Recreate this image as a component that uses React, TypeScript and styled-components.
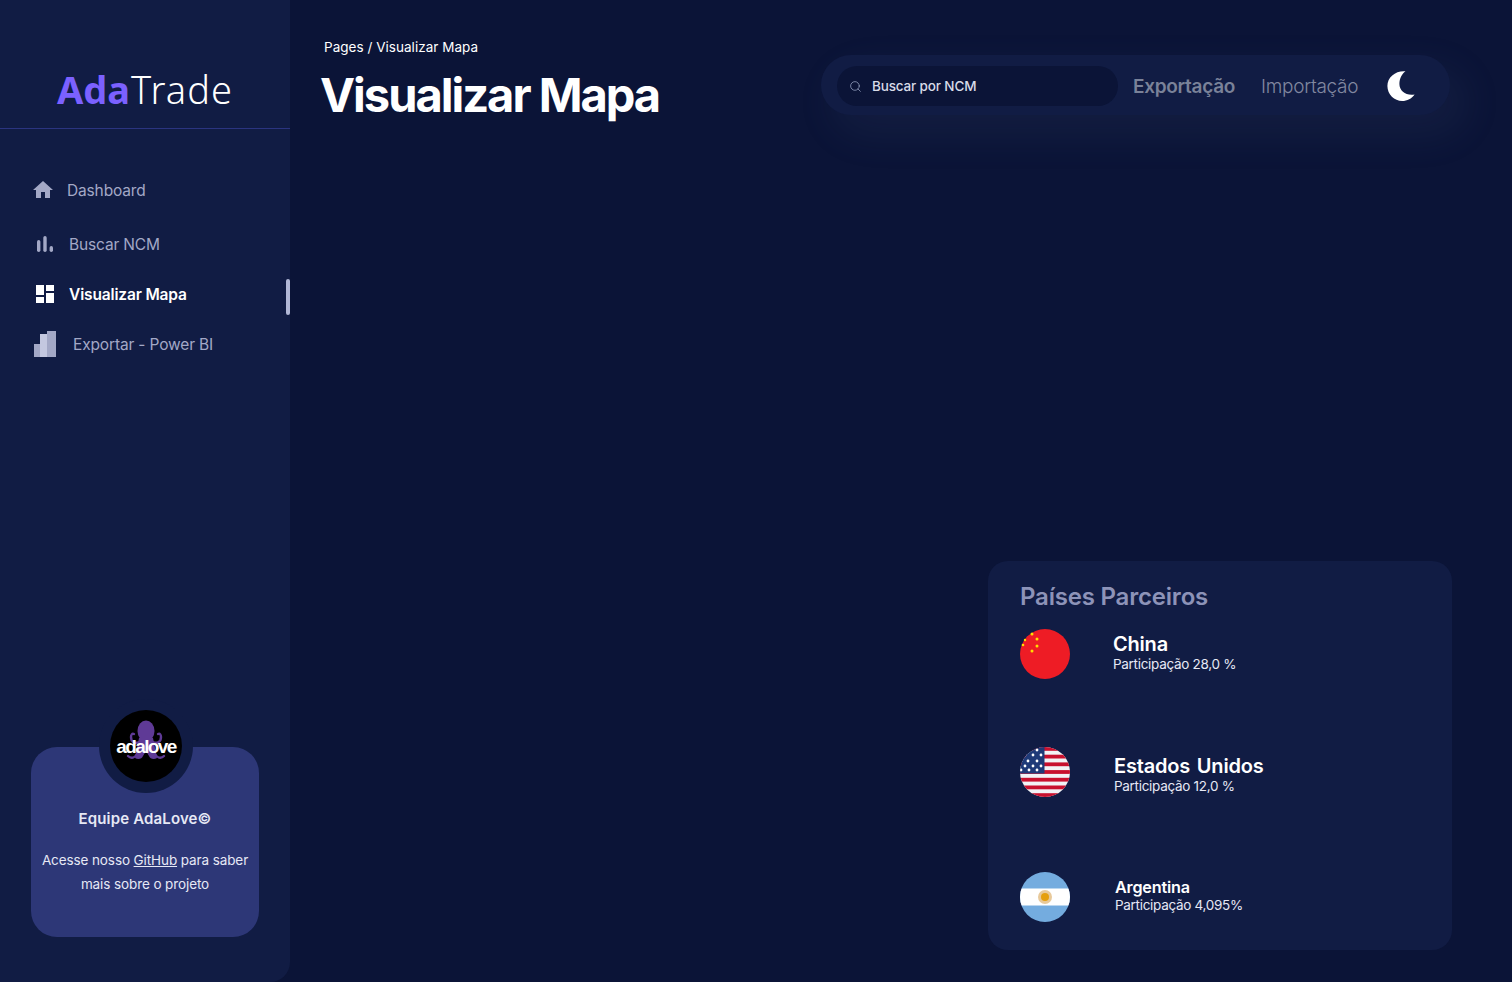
import React from "react";
import styled, { createGlobalStyle } from "styled-components";
import { MdHome, MdDashboard } from "react-icons/md";
import { Search } from "lucide-react";

const Global = createGlobalStyle`
  html, body { margin: 0; padding: 0; background: #0b1437; }
  body { font-family: Inter, "Noto Sans", sans-serif; }
  * { box-sizing: border-box; }
`;

const Page = styled.div`
  display: flex;
  width: 1512px;
  height: 982px;
  overflow: hidden;
  background: #0b1437;
`;

const Sidebar = styled.aside`
  width: 290px;
  height: 982px;
  flex: none;
  display: flex;
  flex-direction: column;
  background: #111c44;
  border-bottom-right-radius: 20px;
`;

const LogoBlock = styled.div`
  height: 129px;
  padding-top: 66px;
  padding-left: 57px;
  border-bottom: 1px solid #2b3480;
  font-family: "Noto Sans", sans-serif;
  font-size: 38px;
  line-height: 46px;
  letter-spacing: 1.1px;
  font-weight: 300;
  color: #fff;
  white-space: nowrap;
`;

const LogoAccent = styled.span`
  margin-right: 1px;
  color: #7b61ff;
  font-weight: 700;
  letter-spacing: 0;
`;

const Nav = styled.nav`
  display: flex;
  flex-direction: column;
  padding-top: 34px;
`;

const NavItem = styled.a<{ $active?: boolean; $h: number; $gap: number; $left: number }>`
  position: relative;
  display: flex;
  align-items: center;
  height: ${(p) => p.$h}px;
  padding-left: ${(p) => p.$left}px;
  gap: ${(p) => p.$gap}px;
  font-size: 15.5px;
  font-weight: ${(p) => (p.$active ? 600 : 400)};
  letter-spacing: -0.15px;
  color: ${(p) => (p.$active ? "#ffffff" : "#a3a8c6")};
  white-space: nowrap;
`;

const ActiveBar = styled.span`
  position: absolute;
  right: 0;
  top: 8px;
  width: 4px;
  height: 36px;
  border-radius: 2px;
  background: #b1b7d6;
`;

const Bottom = styled.div`
  margin-top: auto;
  padding: 0 31px 45px;
`;

const Card = styled.div`
  position: relative;
  width: 228px;
  height: 190px;
  padding-top: 62px;
  border-radius: 26px;
  background: #2d3777;
  text-align: center;
  color: #fff;
`;

const AvatarRing = styled.div`
  position: absolute;
  left: 68px;
  top: -48px;
  width: 94px;
  height: 94px;
  border-radius: 50%;
  background: #111c44;
  display: flex;
  align-items: center;
  justify-content: center;
`;

const Avatar = styled.div`
  position: relative;
  width: 72px;
  height: 72px;
  border-radius: 50%;
  background: #000;
  overflow: hidden;
`;

const AvatarText = styled.span`
  position: absolute;
  left: 0;
  right: 0;
  top: 25px;
  text-align: center;
  font-family: "Liberation Sans", sans-serif;
  font-size: 19px;
  line-height: 24px;
  font-weight: 700;
  letter-spacing: -1.6px;
  color: #fff;
`;

const OctopusIcon = styled.svg`
  position: absolute;
  left: 12px;
  top: 10px;
`;

const CardTitle = styled.div`
  font-size: 15px;
  font-weight: 600;
  line-height: 20px;
  letter-spacing: 0.15px;
  color: #e6e8f5;
`;

const CardText = styled.p`
  margin: 19px 0 0;
  font-size: 13.5px;
  line-height: 24px;
  letter-spacing: -0.1px;
  color: #e6e8f5;
`;

const CardLink = styled.a`
  text-decoration: underline;
`;

const Main = styled.main`
  flex: 1;
  display: flex;
  flex-direction: column;
  padding: 38px 60px 32px 30px;
`;

const Header = styled.header`
  display: flex;
  justify-content: space-between;
  align-items: flex-start;
`;

const TitleBlock = styled.div`
  display: flex;
  flex-direction: column;
`;

const Crumb = styled.div`
  padding-left: 4px;
  font-size: 13.5px;
  line-height: 18px;
  letter-spacing: 0.03px;
  color: #fff;
`;

const Title = styled.h1`
  margin: 10px 0 0;
  font-size: 47px;
  line-height: 58px;
  font-weight: 700;
  letter-spacing: -2px;
  color: #fff;
`;

const Toolbar = styled.div`
  display: flex;
  align-items: center;
  width: 629px;
  height: 60px;
  margin: 17px 2px 0 0;
  padding: 2px 0 0 16px;
  border-radius: 30px;
  background: #111c44;
  box-shadow: 14px 17px 40px 4px rgba(112, 144, 176, 0.08);
`;

const SearchBox = styled.div`
  display: flex;
  align-items: center;
  gap: 10px;
  width: 281px;
  height: 40px;
  padding-left: 12px;
  border-radius: 20px;
  background: #0b1437;
  font-size: 13.5px;
  font-weight: 500;
  letter-spacing: -0.15px;
  color: #d8dbe8;
`;

const Tab = styled.span<{ $strong?: boolean; $ml: number }>`
  margin-left: ${(p) => p.$ml}px;
  font-size: 19px;
  font-weight: ${(p) => (p.$strong ? 600 : 300)};
  letter-spacing: -0.3px;
  color: ${(p) => (p.$strong ? "#7a8299" : "#8188a0")};
`;

const MoonIcon = styled.svg`
  margin-left: 29px;
  flex: none;
`;

const Panel = styled.section`
  margin: auto 0 0 auto;
  width: 464px;
  height: 389px;
  padding: 20px 32px 0;
  border-radius: 20px;
  background: #111c44;
`;

const PanelTitle = styled.h2`
  margin: 0 0 16px;
  font-size: 24px;
  line-height: 32px;
  font-weight: 600;
  letter-spacing: -0.2px;
  color: #8d93b8;
`;

const Partner = styled.div<{ $gap: number; $mt: number }>`
  display: flex;
  align-items: flex-start;
  gap: ${(p) => p.$gap}px;
  margin-top: ${(p) => p.$mt}px;
`;

const Flag = styled.svg`
  flex: none;
  display: block;
`;

const PartnerInfo = styled.div<{ $pt: number }>`
  padding-top: ${(p) => p.$pt}px;
  color: #fff;
`;

const PartnerName = styled.div<{ $small?: boolean }>`
  font-size: ${(p) => (p.$small ? 16.2 : 20)}px;
  line-height: ${(p) => (p.$small ? 18 : 22)}px;
  font-weight: 600;
  letter-spacing: -0.2px;
  word-spacing: 2px;
`;

const PartnerShare = styled.div`
  margin-top: 1px;
  font-size: 13.5px;
  line-height: 16px;
  letter-spacing: -0.3px;
  color: #e6e8f5;
`;

function Bars() {
  return (
    <svg width="16" height="16" viewBox="0 0 16 16" fill="#a3a8c6" aria-hidden="true">
      <rect x="0" y="4" width="3.4" height="12" rx="1.7" />
      <rect x="6.3" y="0" width="3.4" height="16" rx="1.7" />
      <rect x="12.6" y="10" width="3.4" height="6" rx="1.7" />
    </svg>
  );
}

function PowerBi() {
  return (
    <svg width="22" height="26" viewBox="0 0 22 26" aria-hidden="true">
      <rect x="0" y="13" width="9" height="13" fill="#a3a8c6" />
      <rect x="6" y="3" width="7" height="23" fill="#c4c8e0" />
      <rect x="13" y="0" width="9" height="26" fill="#a3a8c6" />
    </svg>
  );
}

function Octopus() {
  return (
    <OctopusIcon width="48" height="54" viewBox="0 0 48 54" aria-hidden="true">
      <g fill="#5f3a96">
        <ellipse cx="24" cy="11" rx="8.5" ry="10.5" />
        <path d="M17 18h14l4 20c-3 2-7 1-8-2l-3-5-3 5c-1 3-5 4-8 2z" />
      </g>
      <g fill="none" stroke="#5f3a96" strokeWidth="2.4" strokeLinecap="round">
        <path d="M17 22c-4 2-8 0-8-5 0-2 1-4 3-3" />
        <path d="M31 22c4 2 8 0 8-5 0-2-1-4-3-3" />
        <path d="M15 34c-2 4-6 5-9 2" />
        <path d="M33 34c2 4 6 5 9 2" />
      </g>
    </OctopusIcon>
  );
}

function ChinaFlag() {
  const stars: [number, number, number][] = [
    [3, 16, 1.3],
    [5, 11, 1.2],
    [12, 5, 1.5],
    [17, 10, 1.5],
    [17, 17, 1.5],
    [12, 22, 1.5],
  ];
  return (
    <Flag width="50" height="50" viewBox="0 0 50 50" aria-hidden="true">
      <circle cx="25" cy="25" r="25" fill="#ee1c25" />
      {stars.map(([x, y, r]) => (
        <circle key={`${x}-${y}`} cx={x} cy={y} r={r} fill="#ffde00" />
      ))}
    </Flag>
  );
}

function UsaFlag() {
  const rows = [0, 1, 2, 3, 4, 5, 6];
  const stars = [
    [17, 3], [5, 8], [13, 8], [21, 8], [8, 14], [17, 14], [5, 19], [13, 19], [21, 19], [1, 23], [9, 23], [17, 23],
  ];
  return (
    <Flag width="50" height="50" viewBox="0 0 50 50" aria-hidden="true">
      <defs>
        <clipPath id="usa">
          <circle cx="25" cy="25" r="25" />
        </clipPath>
      </defs>
      <g clipPath="url(#usa)">
        <rect width="50" height="50" fill="#f2f2f5" />
        {rows.map((i) => (
          <rect key={i} x="0" y={i * 7.7} width="50" height="3.8" fill="#c8102e" />
        ))}
        <rect width="24.5" height="26.5" fill="#1f3a78" />
        {stars.map(([x, y]) => (
          <circle key={`${x}-${y}`} cx={x} cy={y} r="1.4" fill="#fff" />
        ))}
      </g>
    </Flag>
  );
}

function ArgentinaFlag() {
  return (
    <Flag width="50" height="50" viewBox="0 0 50 50" aria-hidden="true">
      <defs>
        <clipPath id="arg">
          <circle cx="25" cy="25" r="25" />
        </clipPath>
      </defs>
      <g clipPath="url(#arg)">
        <rect width="50" height="50" fill="#74acdf" />
        <rect y="16.5" width="50" height="17" fill="#fff" />
        <circle cx="25" cy="25" r="7" fill="#e8c99a" />
        <circle cx="25" cy="25" r="4" fill="#e59f0f" />
      </g>
    </Flag>
  );
}

export default function App() {
  return (
    <Page>
      <Global />
      <Sidebar>
        <LogoBlock>
          <LogoAccent>Ada</LogoAccent>Trade
        </LogoBlock>
        <Nav>
          <NavItem $h={54} $gap={12} $left={31}>
            <MdHome size={24} />
            Dashboard
          </NavItem>
          <NavItem $h={54} $gap={16} $left={37}>
            <Bars />
            Buscar NCM
          </NavItem>
          <NavItem $active $h={46} $gap={12} $left={33}>
            <MdDashboard size={24} />
            Visualizar Mapa
            <ActiveBar />
          </NavItem>
          <NavItem $h={54} $gap={17} $left={34}>
            <PowerBi />
            Exportar - Power BI
          </NavItem>
        </Nav>
        <Bottom>
          <Card>
            <AvatarRing>
              <Avatar>
                <Octopus />
                <AvatarText>adalove</AvatarText>
              </Avatar>
            </AvatarRing>
            <CardTitle>Equipe AdaLove©</CardTitle>
            <CardText>
              Acesse nosso <CardLink>GitHub</CardLink> para saber
              <br />
              mais sobre o projeto
            </CardText>
          </Card>
        </Bottom>
      </Sidebar>
      <Main>
        <Header>
          <TitleBlock>
            <Crumb>Pages / Visualizar Mapa</Crumb>
            <Title>Visualizar Mapa</Title>
          </TitleBlock>
          <Toolbar>
            <SearchBox>
              <Search size={13} strokeWidth={1.5} color="#8f9bba" />
              Buscar por NCM
            </SearchBox>
            <Tab $strong $ml={15}>Exportação</Tab>
            <Tab $ml={26}>Importação</Tab>
            <MoonIcon width="28" height="30" viewBox="0 0 28 30" aria-hidden="true">
              <path
                fill="#fff"
                d="M18.5 0.3C9 -0.6 0.4 5.9 0.4 15c0 8.6 7 15 14.8 15 5 0 9.4-2.2 12.4-6.5-8 1.6-15.2-3.2-15.2-10.5C12.4 7.6 15 3 18.5 0.3z"
              />
            </MoonIcon>
          </Toolbar>
        </Header>
        <Panel>
          <PanelTitle>Países Parceiros</PanelTitle>
          <Partner $gap={43} $mt={0}>
            <ChinaFlag />
            <PartnerInfo $pt={4}>
              <PartnerName>China</PartnerName>
              <PartnerShare>Participação 28,0 %</PartnerShare>
            </PartnerInfo>
          </Partner>
          <Partner $gap={44} $mt={68}>
            <UsaFlag />
            <PartnerInfo $pt={8}>
              <PartnerName>Estados Unidos</PartnerName>
              <PartnerShare>Participação 12,0 %</PartnerShare>
            </PartnerInfo>
          </Partner>
          <Partner $gap={45} $mt={75}>
            <ArgentinaFlag />
            <PartnerInfo $pt={6}>
              <PartnerName $small>Argentina</PartnerName>
              <PartnerShare>Participação 4,095%</PartnerShare>
            </PartnerInfo>
          </Partner>
        </Panel>
      </Main>
    </Page>
  );
}
